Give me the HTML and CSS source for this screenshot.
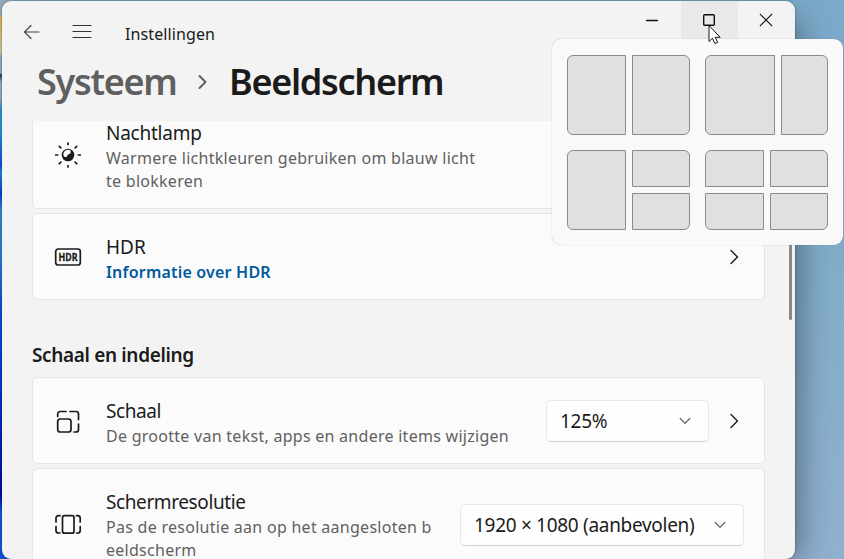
FILE: index.html
```
<!DOCTYPE html>
<html lang="nl">
<head>
    <meta charset="UTF-8">
    <title>Instellingen</title>
    <link rel="stylesheet" href="styles.css">
</head>
<body>
    <div class="window">
        <div class="titlebar">
            <svg class="back" width="18" height="16" viewBox="0 0 18 16"><path d="M8 1.500L1.500 8l6.500 6.500M1.500 8h14.500"/></svg>
            <svg class="menu" width="20" height="16" viewBox="0 0 20 16"><path d="M1 1.500h18M1 7.500h18M1 13.500h18"/></svg>
            <span class="app-name">Instellingen</span>
            <div class="caption">
                <span class="btn"><svg width="14" height="14" viewBox="0 0 14 14"><path d="M1.500 7.500h11"/></svg></span>
                <span class="btn hover"><svg width="14" height="14" viewBox="0 0 14 14"><rect x="1.700" y="1.700" width="10.600" height="10.600" rx="1"/></svg></span>
                <span class="btn"><svg class="close" width="14" height="14" viewBox="0 0 14 14"><path d="M1.300 1.300l11.400 11.400M12.700 1.300L1.300 12.700"/></svg></span>
            </div>
        </div>
        <h1>
            <span class="parent">Systeem</span>
            <svg width="12" height="16" viewBox="0 0 12 16"><path d="M2.500 2l6 6-6 6"/></svg>
            <span class="current">Beeldscherm</span>
        </h1>
        <div class="content">
            <div class="card night">
                <svg class="icon" width="28" height="28" viewBox="0 0 28 28">
                    <circle class="fill" cx="14" cy="14" r="6.300"/>
                    <path class="light" d="M9.600 14.800a4.600 4.600 0 0 1 6.900-5.200c.7 2.300-.2 3.200-1.700 3.600-1.100.3-1.300.9-1.600 1.700-.5 1.300-1.800 1.600-3.200.7z"/>
                    <path class="rays" d="M14 2v1.500M14 24.500v1.500M1.700 14h2M24.300 14h2M5.300 5.300l1.600 1.600M21.100 21.100l1.600 1.600M5.300 22.700l1.600-1.600M21.100 6.900l1.600-1.600"/>
                </svg>
                <div class="text">
                    <h3>Nachtlamp</h3>
                    <p>Warmere lichtkleuren gebruiken om blauw licht<br>te blokkeren</p>
                </div>
            </div>
            <div class="card">
                <svg class="icon" width="28" height="28" viewBox="0 0 28 28">
                    <rect x="1.700" y="6" width="24.600" height="16" rx="2.500"/>
                    <text x="4.500" y="18" textLength="19" lengthAdjust="spacingAndGlyphs">HDR</text>
                </svg>
                <div class="text">
                    <h3 class="hdr">HDR</h3>
                    <a class="link">Informatie over HDR</a>
                </div>
                <svg class="arrow" width="10" height="16" viewBox="0 0 10 16"><path d="M2 1.500L8.500 8l-6.500 6.500"/></svg>
            </div>
            <h2>Schaal en indeling</h2>
            <div class="card">
                <svg class="icon" width="28" height="28" viewBox="0 0 28 28">
                    <rect x="3.700" y="12" width="13.300" height="13" rx="2.500"/>
                    <path d="M3.700 9.500V7a2.500 2.500 0 0 1 2.500-2.500H12M16 4.500h6A2.500 2.500 0 0 1 24.500 7v5.500M24.500 17v5.500A2.500 2.500 0 0 1 22 25h-2"/>
                </svg>
                <div class="text">
                    <h3 class="tight">Schaal</h3>
                    <p>De grootte van tekst, apps en andere items wijzigen</p>
                </div>
                <div class="select scale">
                    <span>125%</span>
                    <svg width="12" height="8" viewBox="0 0 12 8"><path d="M1.200 1.500L6 6.300l4.800-4.800"/></svg>
                </div>
                <svg class="arrow" width="10" height="16" viewBox="0 0 10 16"><path d="M2 1.500L8.500 8l-6.500 6.500"/></svg>
            </div>
            <div class="card last">
                <svg class="icon" width="28" height="28" viewBox="0 0 28 28">
                    <rect x="8.500" y="4.700" width="11.500" height="17.500" rx="2"/>
                    <path d="M6 4.700H4.500a2.500 2.500 0 0 0-2.500 2.500V11M2 15.500v4a2.500 2.500 0 0 0 2.500 2.500H6M22.500 4.700h1.200a2.500 2.500 0 0 1 2.500 2.500V11M26.200 15.500v4a2.500 2.500 0 0 1-2.500 2.500H22.500"/>
                </svg>
                <div class="text">
                    <h3 class="tight">Schermresolutie</h3>
                    <p>Pas de resolutie aan op het aangesloten b<br>eeldscherm</p>
                </div>
                <div class="select resolution">
                    <span>1920 × 1080 (aanbevolen)</span>
                    <svg width="12" height="8" viewBox="0 0 12 8"><path d="M1.200 1.500L6 6.300l4.800-4.800"/></svg>
                </div>
            </div>
        </div>
        <div class="scrollbar"></div>
    </div>

    <!-- snap layouts -->
    <div class="snap">
        <div class="layout halves"><i class="tl bl"></i><i class="tr br"></i></div>
        <div class="layout wide"><i class="tl bl"></i><i class="tr br"></i></div>
        <div class="layout three"><i class="tl bl tall"></i><i class="tr"></i><i class="br"></i></div>
        <div class="layout quarters"><i class="tl"></i><i class="tr"></i><i class="bl"></i><i class="br"></i></div>
    </div>
    <svg class="cursor" width="14" height="20" viewBox="0 0 14 20"><path d="M1 1v15.500l3.400-3.200 2.500 5.200 2.800-1.200-2.500-5h4.600z"/></svg>
</body>
</html>
```
FILE: styles.css
```
*{
    margin: 0;
    padding: 0;
    box-sizing: border-box;
}
body{
    width: 844px;
    height: 559px;
    overflow: hidden;
    position: relative;
    padding: 1px 0 0 2px;
    font-family: "Noto Sans", sans-serif;
    color: #1b1b1b;
    background:
        linear-gradient(#91a8ba 0, #91a8ba 15px, #d6ae4a 16px, #c9c3a0 52px, #91a8ba 56px, #91a8ba 73px, #173d68 75px, #8fa9bd 82px, #8fa9bd 99px, #2c93dd 108px, #2390dc 133px, #0a50dc 165px, #1d86dc 172px, #0a42d6 194px, #2a8bd4 210px, #2482d6 255px, #0a4fd6 310px, #0638d0 380px, #0010a0 495px, #0c5ad8 512px, #0a56d8 559px) 0 0 / 10px 559px no-repeat,
        linear-gradient(#7ba9c9, #80acca 45%, #91b0cf);
}
svg{
    fill: none;
    stroke: #1b1b1b;
    stroke-width: 1.4;
    stroke-linecap: round;
    stroke-linejoin: round;
    flex: none;
}
.window{
    width: 793px;
    height: 558px;
    background: #f3f3f3;
    border-radius: 9px;
    overflow: hidden;
    position: relative;
    box-shadow: 0 0 2px rgba(0,0,0,.5), 14px 10px 30px -10px rgba(0,0,0,.4);
}
.titlebar{
    height: 60px;
    display: flex;
    align-items: flex-start;
    padding-left: 21px;
}
.back{
    margin-top: 23px;
    stroke: #444;
    stroke-width: 1.2;
}
.menu{
    margin: 23px 0 0 31px;
    stroke: #333;
    stroke-width: 1.2;
}
.app-name{
    margin: 21px 0 0 33px;
    font-size: 16px;
    line-height: 24px;
    letter-spacing: .1px;
    white-space: nowrap;
}
.caption{
    display: flex;
    margin-left: auto;
}
.btn{
    width: 57px;
    height: 38px;
    display: flex;
    align-items: center;
    justify-content: center;
    padding-right: 2px;
}
.btn svg{
    stroke: #111;
}
.btn .close{
    stroke-width: 1.2;
}
.hover{
    background: #e9e9e9;
}
h1{
    height: 60px;
    display: flex;
    align-items: center;
    padding: 0 0 18px 35px;
    font-size: 36px;
    line-height: 44px;
    font-weight: 600;
    letter-spacing: -1.3px;
    white-space: nowrap;
}
h1 .parent{
    width: 139px;
    color: #5f5f5f;
}
h1 svg{
    margin: 0 20px 0 21px;
    stroke: #5f5f5f;
    stroke-width: 2;
}
.content{
    height: 438px;
    overflow: hidden;
    padding: 0 30px;
}
.card{
    height: 87px;
    display: flex;
    align-items: center;
    background: #fbfbfb;
    border: 1px solid #e5e5e5;
    border-radius: 5px;
    padding: 0 20px 0 21px;
    margin-bottom: 4px;
}
.card.night{
    height: 110px;
    margin-top: -22px;
}
.card.last{
    height: 114px;
}
.icon{
    margin-right: 24px;
    stroke-width: 1.7;
}
.night .icon{
    margin-top: 2px;
}
.icon .fill{
    fill: #1b1b1b;
    stroke: none;
}
.icon .light{
    fill: #fbfbfb;
    stroke: none;
}
.icon text{
    fill: #1b1b1b;
    stroke: #1b1b1b;
    stroke-width: .3;
    font: bold 11px "Noto Sans", sans-serif;
}
.text{
    align-self: flex-start;
    padding-top: 23px;
    flex: 1;
    white-space: nowrap;
}
h3{
    font-size: 19px;
    line-height: 21px;
    font-weight: 400;
    letter-spacing: -.25px;
    margin-bottom: 3px;
}
h3.hdr{
    letter-spacing: 0;
}
h3.tight{
    letter-spacing: -.4px;
}
.text p, .link{
    display: block;
    font-size: 16px;
    line-height: 23px;
    letter-spacing: .27px;
    color: #616161;
}
.text .link{
    color: #005a9e;
    font-weight: 600;
    letter-spacing: .2px;
}
.arrow{
    margin-right: 5px;
}
h2{
    height: 77px;
    margin-top: -4px;
    padding-top: 41px;
    font-size: 19px;
    line-height: 28px;
    font-weight: 600;
    letter-spacing: -.35px;
    white-space: nowrap;
}
.select{
    height: 42px;
    display: flex;
    align-items: center;
    justify-content: space-between;
    background: #fefefe;
    border: 1px solid #e8e8e8;
    border-bottom-color: #cfcfcf;
    border-radius: 5px;
    padding: 0 17px 0 13px;
    font-size: 19px;
    letter-spacing: -.3px;
    flex: none;
    white-space: nowrap;
}
.select svg{
    stroke: #5f5f5f;
    stroke-width: 1.2;
}
.select.scale{
    width: 163px;
    margin-right: 20px;
}
.select.resolution{
    width: 284px;
}
.scrollbar{
    position: absolute;
    right: 3px;
    top: 100px;
    width: 3px;
    height: 219px;
    border-radius: 2px;
    background: #898989;
}
.snap{
    position: absolute;
    left: 552px;
    top: 39px;
    width: 291px;
    height: 206px;
    background: #f9f9f9;
    border-radius: 9px;
    box-shadow: 0 0 1px rgba(0,0,0,.35);
    padding: 16px 15px 15px;
    display: grid;
    grid-template-columns: 123px 123px;
    grid-template-rows: 80px 80px;
    gap: 15px;
}
.layout{
    display: grid;
    grid-template-columns: 59px 58px;
    gap: 6px;
}
.layout.wide{
    grid-template-columns: 70px 47px;
}
.layout.three, .layout.quarters{
    grid-template-rows: 37px 37px;
}
.layout i{
    background: #e0e0e0;
    border: 1px solid #8b8b8b;
}
.layout .tall{
    grid-row: span 2;
}
.tl{ border-top-left-radius: 6px; }
.tr{ border-top-right-radius: 6px; }
.bl{ border-bottom-left-radius: 6px; }
.br{ border-bottom-right-radius: 6px; }
.cursor{
    position: absolute;
    left: 708px;
    top: 25px;
    fill: #fff;
    stroke: #15151f;
    stroke-width: 1;
    stroke-linejoin: miter;
}
```
